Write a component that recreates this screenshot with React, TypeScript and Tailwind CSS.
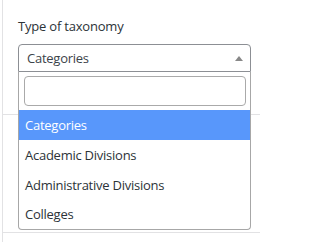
import React from "react";

const options = ["Categories", "Academic Divisions", "Administrative Divisions", "Colleges"];

export default function App() {
  return (
    <div className="w-[260px] h-[242px] bg-white overflow-hidden" style={{ fontFamily: '"Open Sans", "Noto Sans", sans-serif' }}>
      <div className="ml-[2px] h-full border-l border-[#e2e2e4]">
        <div className="h-[115px] border-b border-[#e2e2e4] pl-[15px] pt-[16px]">
          <div className="text-[13px] leading-[20px] font-medium tracking-[-0.2px] text-[#2c3338]">Type of taxonomy</div>
          <div className="relative mt-[8px] w-[233px]">
            <div className="h-[28px] border border-[#8c8f94] rounded-t-[4px] flex items-center justify-between pl-[8px] pr-[7px]">
              <span className="text-[13px] tracking-[-0.25px] text-[#3c434a] pt-[1px]">Categories</span>
              <span className="w-0 h-0 border-x-[4px] border-x-transparent border-b-[5px] border-b-[#888]" />
            </div>
            <div className="absolute left-0 top-full w-[233px] bg-white border border-t-0 border-[#a7a7a7] rounded-b-[4px] z-10">
              <div className="p-[4px] pl-[5px]">
                <div className="h-[30px] border border-[#aaa] rounded-[4px]" />
              </div>
              {options.map((o, i) => (
                <div
                  key={o}
                  className={
                    (i === 0 ? "bg-[#5897fb] text-white " : "text-[#2c3338] ") +
                    (i === 3 ? "h-[29px] " : "h-[30px] ") +
                    "flex items-center pl-[6px] pt-[1px] text-[13px] tracking-[-0.25px]"
                  }
                >
                  {o}
                </div>
              ))}
            </div>
          </div>
        </div>
        <div className="h-[118px] border-b border-[#e2e2e4]" />
      </div>
    </div>
  );
}
